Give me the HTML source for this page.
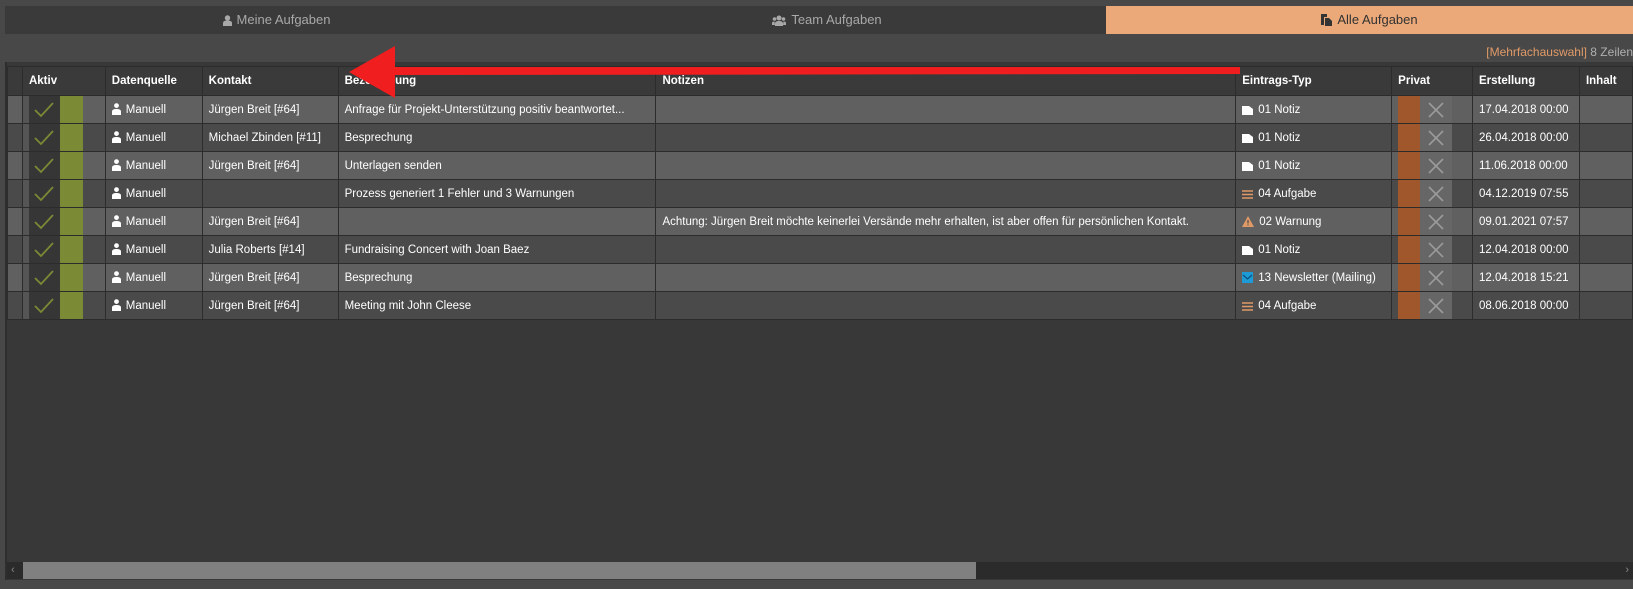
<!DOCTYPE html>
<html><head><meta charset="utf-8"><style>
*{margin:0;padding:0;box-sizing:border-box}
body{width:1633px;height:589px;background:#484848;font-family:"Liberation Sans",sans-serif;font-size:11.5px;color:#fff;position:relative;overflow:hidden}
.tabs{position:absolute;left:5px;top:6px;width:1628px;height:28px;background:#3a3a3a;display:flex}
.tab{height:28px;line-height:28px;text-align:center;color:#a8a8a8;font-size:13px}
.tab.act{background:#eba878;color:#333}
.info{position:absolute;right:0;top:45px;font-size:12px;color:#b0b0b0}
.info span{color:#e09a68}
.grid{position:absolute;left:5px;top:62px;width:1628px;height:518px;background:#383838;border-left:2px solid #2e2e2e}
table{position:absolute;left:0;top:4px;border-collapse:collapse;table-layout:fixed}
td,th{height:28px;border:1px solid #2c2c2c;padding:0 6px;white-space:nowrap;overflow:hidden;text-align:left;position:relative;font-size:11.5px}
th{background:#3a3a3a;font-weight:bold;height:29px}
tr.o td{background:#606060}
tr.e td{background:#4a4a4a}
td.ak{padding:0}
.ak .s{position:absolute;left:0;top:0;bottom:0;width:6px;background:#555}
.ak .d{position:absolute;left:6px;top:0;bottom:0;width:31px;background:#363636}
.ak .g{position:absolute;left:37px;top:0;bottom:0;width:23px;background:#7a8a35}
.ak svg{position:absolute;left:11px;top:6px}
td.pr{padding:0}
.pr .or{position:absolute;left:6px;top:0;bottom:0;width:22px;background:#a0572c}
.pr .x{position:absolute;left:28px;top:0;bottom:0;width:32px;background:#666}
.pr svg{position:absolute;left:36px;top:6px}
.ic{display:inline-block;vertical-align:-2px;margin-right:5px}
.sb{position:absolute;left:7px;top:562px;width:1626px;height:17px;background:#2b2b2b;color:#888;font-size:11px;line-height:17px}
.thm{position:absolute;left:16px;top:0;width:953px;height:17px;background:#808080}
.arrow{position:absolute;left:0;top:0}
</style></head><body>
<div class="tabs">
<div class="tab" style="width:543px"><svg class="ic" width="9" height="11" viewBox="0 0 9 11"><circle cx="4.5" cy="3" r="2.7" fill="#a8a8a8"/><path d="M0 11V8q0-2.5 4.5-2.5T9 8v3z" fill="#a8a8a8"/></svg>Meine Aufgaben</div>
<div class="tab" style="width:558px"><svg class="ic" width="14" height="11" viewBox="0 0 14 11"><circle cx="7" cy="3" r="2.5" fill="#a8a8a8"/><circle cx="2.5" cy="4" r="1.8" fill="#a8a8a8"/><circle cx="11.5" cy="4" r="1.8" fill="#a8a8a8"/><path d="M3 11V8.5q0-2.5 4-2.5t4 2.5V11zM0 10V8q0-1.5 2.5-1.5L3 10zM14 10V8q0-1.5-2.5-1.5L11 10z" fill="#a8a8a8"/></svg>Team Aufgaben</div>
<div class="tab act" style="width:527px"><svg class="ic" width="11" height="12" viewBox="0 0 11 12"><path d="M0 0h6v3H3v8H0z" fill="#333"/><path d="M4 4h4l3 3v5H4z" fill="#333"/></svg>Alle Aufgaben</div>
</div>
<div class="info"><span>[Mehrfachauswahl]</span> 8 Zeilen</div>
<div class="grid">
<table>
<colgroup><col style="width:15px"><col style="width:83px"><col style="width:97px"><col style="width:136px"><col style="width:318px"><col style="width:580px"><col style="width:156px"><col style="width:81px"><col style="width:107px"><col style="width:53px"></colgroup>
<tr><th></th><th>Aktiv</th><th>Datenquelle</th><th>Kontakt</th><th>Bezeichnung</th><th>Notizen</th><th>Eintrags-Typ</th><th>Privat</th><th>Erstellung</th><th>Inhalt</th></tr>

<tr class="o"><td></td><td class="ak"><div class="s"></div><div class="d"></div><div class="g"></div><svg width="20" height="16"><path d="M1 8l6 6L19 1" stroke="#7a8a35" stroke-width="1.8" fill="none"/></svg></td><td><svg class="ic" width="9" height="12" viewBox="0 0 9 12"><circle cx="4.5" cy="2.6" r="2.4" fill="#fff"/><path d="M0 12V8.5Q0 6 4.5 6T9 8.5V12z" fill="#fff"/></svg>Manuell</td><td>Jürgen Breit [#64]</td><td>Anfrage für Projekt-Unterstützung positiv beantwortet...</td><td></td><td><svg class="ic" width="11" height="10" viewBox="0 0 11 10"><path d="M0 1h7l4 3v6H0z" fill="#fff"/></svg>01 Notiz</td><td class="pr"><div class="or"></div><div class="x"></div><svg width="16" height="16"><path d="M1 1L15 15M15 1L1 15" stroke="#9a9a9a" stroke-width="1.6"/></svg></td><td>17.04.2018 00:00</td><td></td></tr>

<tr class="e"><td></td><td class="ak"><div class="s"></div><div class="d"></div><div class="g"></div><svg width="20" height="16"><path d="M1 8l6 6L19 1" stroke="#7a8a35" stroke-width="1.8" fill="none"/></svg></td><td><svg class="ic" width="9" height="12" viewBox="0 0 9 12"><circle cx="4.5" cy="2.6" r="2.4" fill="#fff"/><path d="M0 12V8.5Q0 6 4.5 6T9 8.5V12z" fill="#fff"/></svg>Manuell</td><td>Michael Zbinden [#11]</td><td>Besprechung</td><td></td><td><svg class="ic" width="11" height="10" viewBox="0 0 11 10"><path d="M0 1h7l4 3v6H0z" fill="#fff"/></svg>01 Notiz</td><td class="pr"><div class="or"></div><div class="x"></div><svg width="16" height="16"><path d="M1 1L15 15M15 1L1 15" stroke="#9a9a9a" stroke-width="1.6"/></svg></td><td>26.04.2018 00:00</td><td></td></tr>

<tr class="o"><td></td><td class="ak"><div class="s"></div><div class="d"></div><div class="g"></div><svg width="20" height="16"><path d="M1 8l6 6L19 1" stroke="#7a8a35" stroke-width="1.8" fill="none"/></svg></td><td><svg class="ic" width="9" height="12" viewBox="0 0 9 12"><circle cx="4.5" cy="2.6" r="2.4" fill="#fff"/><path d="M0 12V8.5Q0 6 4.5 6T9 8.5V12z" fill="#fff"/></svg>Manuell</td><td>Jürgen Breit [#64]</td><td>Unterlagen senden</td><td></td><td><svg class="ic" width="11" height="10" viewBox="0 0 11 10"><path d="M0 1h7l4 3v6H0z" fill="#fff"/></svg>01 Notiz</td><td class="pr"><div class="or"></div><div class="x"></div><svg width="16" height="16"><path d="M1 1L15 15M15 1L1 15" stroke="#9a9a9a" stroke-width="1.6"/></svg></td><td>11.06.2018 00:00</td><td></td></tr>

<tr class="e"><td></td><td class="ak"><div class="s"></div><div class="d"></div><div class="g"></div><svg width="20" height="16"><path d="M1 8l6 6L19 1" stroke="#7a8a35" stroke-width="1.8" fill="none"/></svg></td><td><svg class="ic" width="9" height="12" viewBox="0 0 9 12"><circle cx="4.5" cy="2.6" r="2.4" fill="#fff"/><path d="M0 12V8.5Q0 6 4.5 6T9 8.5V12z" fill="#fff"/></svg>Manuell</td><td></td><td>Prozess generiert 1 Fehler und 3 Warnungen</td><td></td><td><svg class="ic" width="11" height="9" viewBox="0 0 11 9"><path d="M0 1h11M0 4.5h11M0 8h11" stroke="#e09a68" stroke-width="1.4"/></svg>04 Aufgabe</td><td class="pr"><div class="or"></div><div class="x"></div><svg width="16" height="16"><path d="M1 1L15 15M15 1L1 15" stroke="#9a9a9a" stroke-width="1.6"/></svg></td><td>04.12.2019 07:55</td><td></td></tr>

<tr class="o"><td></td><td class="ak"><div class="s"></div><div class="d"></div><div class="g"></div><svg width="20" height="16"><path d="M1 8l6 6L19 1" stroke="#7a8a35" stroke-width="1.8" fill="none"/></svg></td><td><svg class="ic" width="9" height="12" viewBox="0 0 9 12"><circle cx="4.5" cy="2.6" r="2.4" fill="#fff"/><path d="M0 12V8.5Q0 6 4.5 6T9 8.5V12z" fill="#fff"/></svg>Manuell</td><td>Jürgen Breit [#64]</td><td></td><td>Achtung: Jürgen Breit möchte keinerlei Versände mehr erhalten, ist aber offen für persönlichen Kontakt.</td><td><svg class="ic" width="12" height="11" viewBox="0 0 12 11"><path d="M6 0L12 11H0z" fill="#e09a68"/><path d="M6 4v3.5M6 8.5v1" stroke="#4a4a4a" stroke-width="1.2"/></svg>02 Warnung</td><td class="pr"><div class="or"></div><div class="x"></div><svg width="16" height="16"><path d="M1 1L15 15M15 1L1 15" stroke="#9a9a9a" stroke-width="1.6"/></svg></td><td>09.01.2021 07:57</td><td></td></tr>

<tr class="e"><td></td><td class="ak"><div class="s"></div><div class="d"></div><div class="g"></div><svg width="20" height="16"><path d="M1 8l6 6L19 1" stroke="#7a8a35" stroke-width="1.8" fill="none"/></svg></td><td><svg class="ic" width="9" height="12" viewBox="0 0 9 12"><circle cx="4.5" cy="2.6" r="2.4" fill="#fff"/><path d="M0 12V8.5Q0 6 4.5 6T9 8.5V12z" fill="#fff"/></svg>Manuell</td><td>Julia Roberts [#14]</td><td>Fundraising Concert with Joan Baez</td><td></td><td><svg class="ic" width="11" height="10" viewBox="0 0 11 10"><path d="M0 1h7l4 3v6H0z" fill="#fff"/></svg>01 Notiz</td><td class="pr"><div class="or"></div><div class="x"></div><svg width="16" height="16"><path d="M1 1L15 15M15 1L1 15" stroke="#9a9a9a" stroke-width="1.6"/></svg></td><td>12.04.2018 00:00</td><td></td></tr>

<tr class="o"><td></td><td class="ak"><div class="s"></div><div class="d"></div><div class="g"></div><svg width="20" height="16"><path d="M1 8l6 6L19 1" stroke="#7a8a35" stroke-width="1.8" fill="none"/></svg></td><td><svg class="ic" width="9" height="12" viewBox="0 0 9 12"><circle cx="4.5" cy="2.6" r="2.4" fill="#fff"/><path d="M0 12V8.5Q0 6 4.5 6T9 8.5V12z" fill="#fff"/></svg>Manuell</td><td>Jürgen Breit [#64]</td><td>Besprechung</td><td></td><td><svg class="ic" width="11" height="11" viewBox="0 0 11 11"><rect width="11" height="11" fill="#1e9ad6"/><path d="M1 3l4.5 4L10 3" stroke="#0b4f7a" stroke-width="1.2" fill="none"/></svg>13 Newsletter (Mailing)</td><td class="pr"><div class="or"></div><div class="x"></div><svg width="16" height="16"><path d="M1 1L15 15M15 1L1 15" stroke="#9a9a9a" stroke-width="1.6"/></svg></td><td>12.04.2018 15:21</td><td></td></tr>

<tr class="e"><td></td><td class="ak"><div class="s"></div><div class="d"></div><div class="g"></div><svg width="20" height="16"><path d="M1 8l6 6L19 1" stroke="#7a8a35" stroke-width="1.8" fill="none"/></svg></td><td><svg class="ic" width="9" height="12" viewBox="0 0 9 12"><circle cx="4.5" cy="2.6" r="2.4" fill="#fff"/><path d="M0 12V8.5Q0 6 4.5 6T9 8.5V12z" fill="#fff"/></svg>Manuell</td><td>Jürgen Breit [#64]</td><td>Meeting mit John Cleese</td><td></td><td><svg class="ic" width="11" height="9" viewBox="0 0 11 9"><path d="M0 1h11M0 4.5h11M0 8h11" stroke="#e09a68" stroke-width="1.4"/></svg>04 Aufgabe</td><td class="pr"><div class="or"></div><div class="x"></div><svg width="16" height="16"><path d="M1 1L15 15M15 1L1 15" stroke="#9a9a9a" stroke-width="1.6"/></svg></td><td>08.06.2018 00:00</td><td></td></tr>
</table>
</div>
<div class="sb"><span style="position:absolute;left:4px">‹</span><div class="thm"></div><span style="position:absolute;right:4px">›</span></div>
<svg class="arrow" width="1633" height="589"><path d="M392 67L1240 67L1240 74L392 75z" fill="#f01e1e"/><path d="M349 72L395 46L395 98z" fill="#f01e1e"/></svg>
</body></html>
